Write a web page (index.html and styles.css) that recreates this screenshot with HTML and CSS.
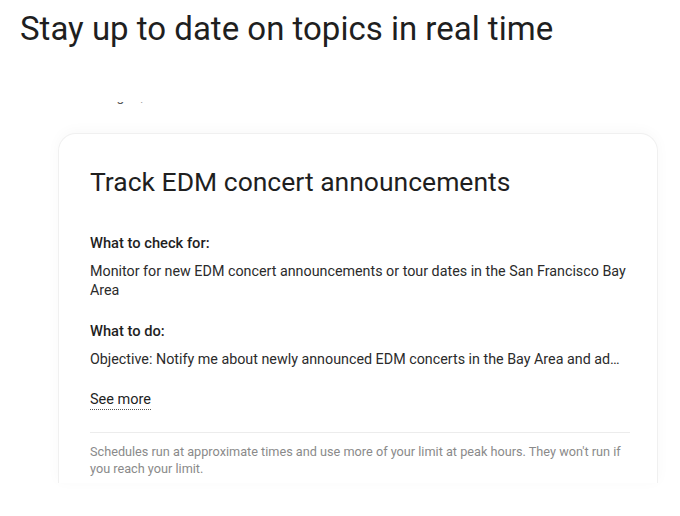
FILE: index.html
```html
<!DOCTYPE html>
<html>
<head>
<meta charset="utf-8">
<link rel="stylesheet" href="styles.css">
</head>
<body>
<div class="page">
  <h1 class="headline">Stay up to date on topics in real time</h1>
  <div class="clipped"><div class="clipped-text">Using AI, check the latest</div></div>
  <div class="card">
    <h2 class="card-title">Track EDM concert announcements</h2>
    <div class="section">
      <div class="label">What to check for:</div>
      <p class="body">Monitor for new EDM concert announcements or tour dates in the San Francisco Bay Area</p>
    </div>
    <div class="section">
      <div class="label">What to do:</div>
      <p class="body truncate">Objective: Notify me about newly announced EDM concerts in the Bay Area and add them to my calendar.</p>
    </div>
    <a class="see-more">See more</a>
    <div class="divider"></div>
    <p class="note">Schedules run at approximate times and use more of your limit at peak hours. They won't run if you reach your limit.</p>
  </div>
</div>
</body>
</html>
```
FILE: styles.css
```css
* { box-sizing: border-box; }
html, body { margin: 0; padding: 0; background: #ffffff; }
body {
  font-family: Roboto, "Noto Sans", "Liberation Sans", sans-serif;
  color: #1f1f1f;
  width: 680px;
  height: 516px;
  overflow: hidden;
}
.page {
  padding: 9px 0 0 20px;
}
.headline {
  margin: 0;
  font-size: 33px;
  line-height: 40px;
  font-weight: 400;
  color: #1f1f1f;
}
.clipped {
  margin: 53px 0 0 69px;
  height: 5px;
  overflow: hidden;
}
.clipped-text {
  margin-top: -13px;
  font-size: 14px;
  line-height: 14px;
  color: #555;
  white-space: nowrap;
}
.card {
  margin: 26px 0 0 38px;
  width: 600px;
  height: 350px;
  padding: 30px 30px 0 31px;
  border: 1px solid #f0f0f0;
  border-bottom: none;
  border-radius: 18px 18px 0 0;
  box-shadow: 0 -2px 14px rgba(0, 0, 0, 0.03);
  background: #fff;
}
.card-title {
  margin: 0;
  font-size: 26.5px;
  line-height: 36px;
  font-weight: 400;
  color: #1f1f1f;
}
.section { margin-top: 33px; }
.section + .section { margin-top: 21px; }
.label {
  font-size: 14.7px;
  line-height: 20px;
  font-weight: 500;
  color: #1f1f1f;
}
.body {
  margin: 9px 0 0 0;
  font-size: 14.3px;
  line-height: 19px;
  color: #2b2b2b;
}
.truncate {
  white-space: nowrap;
  overflow: hidden;
  text-overflow: ellipsis;
  width: 535px;
}
.see-more {
  display: inline-block;
  margin-top: 22px;
  font-size: 14.5px;
  line-height: 18px;
  color: #1f1f1f;
  text-decoration: none;
  border-bottom: 1.5px dotted #555;
}
.divider {
  margin-top: 22px;
  height: 1px;
  width: 540px;
  background: #ececec;
}
.note {
  margin: 10px 0 0 0;
  font-size: 12.7px;
  line-height: 17px;
  color: #8a8a8a;
}
```
